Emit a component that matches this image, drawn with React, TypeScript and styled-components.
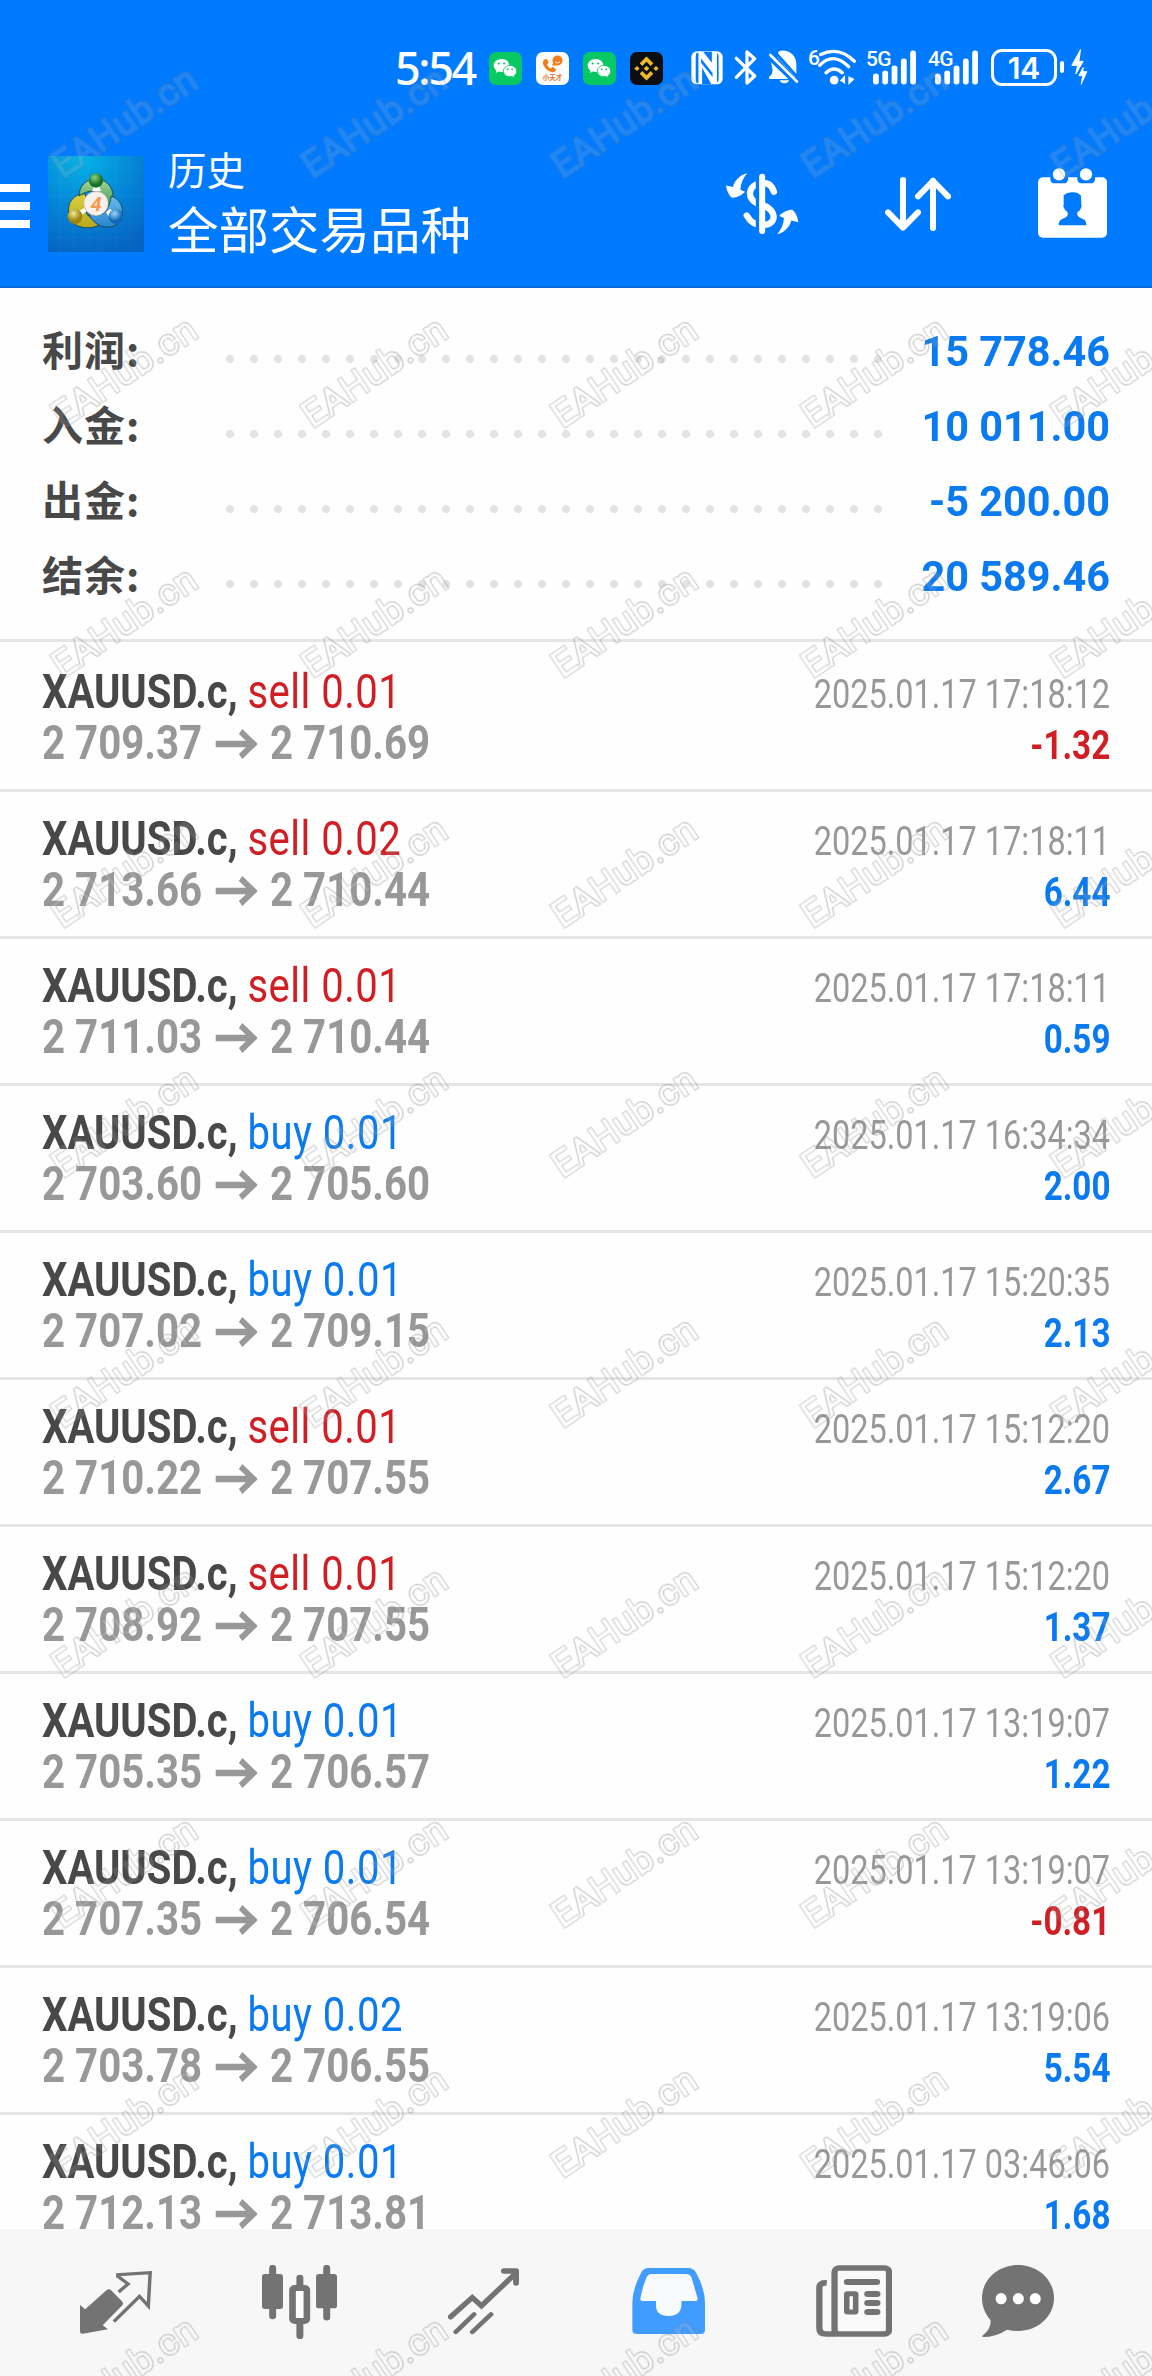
import React from "react";
import styled, { createGlobalStyle } from "styled-components";

const blue = "#007aff";

const Global = createGlobalStyle`
  body { margin: 0; background: #fff; }
  svg { display: block; flex: none; }
`;

const Screen = styled.main`
  position: relative;
  width: 1152px;
  height: 2376px;
  overflow: hidden;
  display: flex;
  flex-direction: column;
  background: #fefefe;
  font-family: Roboto, "Noto Sans CJK SC", sans-serif;
`;

const Header = styled.header`
  height: 288px;
  flex: none;
  box-sizing: border-box;
  background: ${blue};
  border-bottom: 2px solid #0b6bdc;
  color: #fff;
`;

const StatusBar = styled.div`
  height: 136px;
  box-sizing: border-box;
  padding: 49px 64px 0 395px;
  display: flex;
  align-items: flex-start;
`;

const Clock = styled.span`
  width: 93px;
  font: 500 45px/38px "Noto Sans", sans-serif;
  letter-spacing: -2.4px;
  white-space: nowrap;
`;

const Slot = styled.div<{ $gap: number; $top?: number }>`
  margin-left: ${(p) => p.$gap}px;
  margin-top: ${(p) => p.$top ?? 0}px;
  display: flex;
`;

const NetLabel = styled.span<{ $w: number }>`
  width: ${(p) => p.$w}px;
  font: 500 21px/18px Roboto, sans-serif;
  letter-spacing: -0.8px;
  white-space: nowrap;
`;

const Battery = styled.div`
  width: 66px;
  height: 37px;
  box-sizing: border-box;
  border: 3px solid #fff;
  border-radius: 11px;
  margin-left: 12px;
  text-align: center;
  font: 600 30px/32px Inter, sans-serif;
`;

const BatteryNub = styled.i`
  width: 4px;
  height: 12px;
  border-radius: 2px;
  background: #fff;
  margin: 12px 0 0 3px;
`;

const AppBar = styled.div`
  height: 150px;
  display: flex;
  align-items: flex-start;
`;

const Menu = styled.div`
  width: 30px;
  margin: 48px 18px 0 0;
  display: flex;
  flex-direction: column;
  gap: 10px;
`;

const MenuLine = styled.i`
  height: 8px;
  background: #fff;
`;

const LogoBox = styled.div`
  margin-top: 20px;
`;

const Titles = styled.div`
  flex: 1;
  padding: 9px 0 0 24px;
`;

const Section = styled.div`
  font-size: 38.5px;
  line-height: 54px;
`;

const Subject = styled.div`
  font-size: 50.5px;
  line-height: 66px;
`;

const Action = styled.div<{ $top: number; $right: number }>`
  margin: ${(p) => p.$top}px ${(p) => p.$right}px 0 0;
`;

const Summary = styled.section`
  height: 351px;
  flex: none;
  border-bottom: 3px solid #e5e5e5;
`;

const SummaryRows = styled.div`
  padding: 26px 42px 0 42px;
`;

const SummaryRow = styled.div`
  height: 75px;
  display: flex;
  align-items: center;
`;

const Label = styled.span`
  width: 176px;
  height: 75px;
  margin-top: -7px;
  color: #484848;
  font: 700 41px/75px "Noto Sans CJK SC", sans-serif;
  letter-spacing: 1px;
`;

const Leader = styled.span`
  width: 672px;
  height: 24px;
  margin-top: 18px;
  background: radial-gradient(circle at 12px 10px, #e3e3e3 3.6px, transparent 4.4px) 0 0 / 24px 24px repeat-x;
`;

const Amount = styled.span`
  flex: 1;
  text-align: right;
  color: #0a7af0;
  font-weight: 700;
  font-size: 42px;
  line-height: 74px;
  white-space: nowrap;
  transform: scaleX(0.985);
  transform-origin: right;
`;

const Deals = styled.section`
  flex: 1;
  min-height: 0;
  overflow: hidden;
  padding-top: 3px;
`;

const Deal = styled.article`
  height: 144px;
  border-bottom: 3px solid #e5e5e5;
  display: flex;
  justify-content: space-between;
  padding: 0 42px;
`;

const Column = styled.div<{ $end?: boolean }>`
  padding-top: ${(p) => (p.$end ? 24 : 21)}px;
  display: flex;
  flex-direction: column;
  align-items: ${(p) => (p.$end ? "flex-end" : "flex-start")};
`;

const Line = styled.div<{ $scale: number; $size: number; $end?: boolean }>`
  height: 51px;
  display: flex;
  align-items: baseline;
  white-space: pre;
  font-size: ${(p) => p.$size}px;
  line-height: 51px;
  transform: scaleX(${(p) => p.$scale});
  transform-origin: ${(p) => (p.$end ? "right" : "left")};
`;

const Symbol = styled.span`
  color: #484848;
  font-weight: 700;
`;

const Side = styled.span<{ $sell: boolean }>`
  color: ${(p) => (p.$sell ? "#d01f24" : "#0a7af0")};
  letter-spacing: 0.6px;
`;

const Price = styled.span`
  color: #989898;
  font-weight: 700;
`;

const Stamp = styled.span`
  color: #989898;
`;

const Profit = styled.span<{ $loss: boolean }>`
  color: ${(p) => (p.$loss ? "#d01f24" : "#0a7af0")};
  font-weight: 700;
`;

const ArrowIcon = styled.svg`
  margin: 0 15px 2px 16px;
`;

const Nav = styled.nav`
  height: 147px;
  flex: none;
  box-sizing: border-box;
  background: #f7f7f7;
  padding: 36px 0 0 80px;
  display: flex;
  gap: 110px;
  align-items: flex-start;
  color: #737373;
`;

const Tab = styled.div<{ $top?: number; $shift?: number; $active?: boolean }>`
  margin-top: ${(p) => p.$top ?? 0}px;
  margin-left: ${(p) => p.$shift ?? 0}px;
  color: ${(p) => (p.$active ? "#419cff" : "inherit")};
`;

const MarkLayer = styled.div`
  position: absolute;
  left: 63px;
  top: -71px;
  display: grid;
  grid-template-columns: repeat(5, 250px);
  grid-auto-rows: 250px;
  pointer-events: none;
`;

const MarkCell = styled.div`
  display: flex;
  align-items: flex-end;
`;

const Mark = styled.span`
  font: 300 35.5px/26px Roboto, sans-serif;
  letter-spacing: 1.7px;
  color: #000;
  -webkit-text-stroke: 3.4px #000;
  stroke-linejoin: round;
  padding-top: 10px;
  filter: url(#hollow);
  transform: rotate(-34deg);
  transform-origin: left bottom;
`;

const WeChat = () => (
  <svg width="33" height="33" viewBox="0 0 33 33">
    <rect width="33" height="33" rx="7" fill="#07c862" />
    <path d="M12.500 7c-4.500 0-7.800 3-7.800 6.500 0 2 1 3.700 2.800 5l-.8 2.600 3-1.500c.9.3 1.900.4 2.800.4 4.500 0 7.800-2.800 7.800-6.500S17 7 12.500 7z" fill="#fff" />
    <path d="M21 13.500c-4 0-6.700 2.600-6.700 5.600 0 3.100 2.800 5.600 6.700 5.600.8 0 1.600-.1 2.300-.3l2.600 1.300-.7-2.200c1.600-1.100 2.500-2.700 2.500-4.400 0-3-2.800-5.600-6.700-5.600z" fill="#fff" stroke="#07c862" strokeWidth=".8" />
    <g fill="#07c862">
      <circle cx="9.800" cy="11.500" r="1.100" /><circle cx="15.200" cy="11.500" r="1.100" />
      <circle cx="18.800" cy="17.300" r=".9" /><circle cx="23.200" cy="17.300" r=".9" />
    </g>
  </svg>
);

const KidPhone = () => (
  <svg width="33" height="33" viewBox="0 0 33 33">
    <rect width="33" height="33" rx="7" fill="#fbfbfb" />
    <path d="M8.500 7.500c-2.500 1.500-1.800 5 .4 8 2.300 3 5.600 5 8.400 4.600 1.600-.3 2.600-1.600 3-2.700l-3.600-2.600-2 1.600c-1.800-.8-3-2.200-3.700-4l1.700-1.600-1.800-3.800z" fill="#f07c1c" />
    <circle cx="21.500" cy="8.500" r="5" fill="#f07c1c" />
    <path d="M16 13.500l2-4 3 4z" fill="#f07c1c" />
    <path d="M19 10q2.500 2 5 0" stroke="#fff" strokeWidth=".9" fill="none" />
    <text x="16.500" y="28" fontSize="6.500" fontWeight="700" textAnchor="middle" fill="#e0742c" fontFamily="Noto Sans CJK SC, sans-serif">小天才</text>
  </svg>
);

const Binance = () => (
  <svg width="33" height="33" viewBox="0 0 33 33">
    <rect width="33" height="33" rx="7" fill="#0c0e12" />
    <g fill="#efb92d">
      <path d="M16.500 4.500l6.800 6.800-2.600 2.600-4.200-4.200-4.200 4.200-2.600-2.600z" />
      <path d="M16.500 28.500l6.800-6.800-2.600-2.600-4.200 4.200-4.200-4.200-2.600 2.600z" />
      <path d="M16.500 13.700l2.800 2.800-2.800 2.800-2.800-2.800z" />
      <path d="M7 13.900l2.600 2.600L7 19.100l-2.600-2.600zM26 13.900l2.600 2.600-2.600 2.600-2.600-2.600z" />
    </g>
  </svg>
);

const Nfc = () => (
  <svg width="32" height="34" viewBox="63 62 95 101">
    <rect x="64" y="63" width="93" height="98" rx="17" fill="#fff" />
    <path d="M80 67l5 0v90h-5q-3-4-3-12V79q0-8 3-12zM140 67v90q5-4 5-12V79q0-8-5-12z" fill={blue} />
    <path d="M99 64l26 33V64zM96 160h27L96 112z" fill={blue} />
    <path d="M93 84l34 43v12L93 97z" fill={blue} />
  </svg>
);

const Bluetooth = () => (
  <svg width="24" height="35" viewBox="192 60 68 105" fill="none" stroke="#fff" strokeWidth="10" strokeLinecap="round" strokeLinejoin="round">
    <path d="M197 85l55 53-23 21V66l23 20-55 56" />
  </svg>
);

const BellOff = () => (
  <svg width="31" height="34" viewBox="294 61 91 102">
    <path d="M324 66q16-8 34 2 18 10 20 34v38l-4 2-54-60z" fill="#fff" />
    <path d="M302 98l52 50h-55q-7-4 0-9 8-6 8-18z" fill="#fff" />
    <path d="M328 152h28q-3 9-14 9t-14-9z" fill="#fff" />
    <path d="M314 68l70 78" stroke={blue} strokeWidth="9" />
    <path d="M300 76l80 80" stroke="#fff" strokeWidth="8" strokeLinecap="round" />
  </svg>
);

const Wifi = () => (
  <svg width="39" height="36" viewBox="444 58 116 106" fill="none" stroke="#fff" strokeWidth="10" strokeLinecap="round">
    <path d="M452 74q54-26 100 20M449 106q40-42 86 4M468 128q24-22 48 0" />
    <circle cx="492" cy="150" r="13" fill="#fff" stroke="none" />
    <path d="M511 152l12-13v21M536 141v20l14-14z" strokeWidth="3" fill="#fff" />
  </svg>
);

const Signal = () => (
  <svg width="44" height="35" viewBox="0 0 44 35" fill="#fff">
    {[11, 14, 19, 26, 34].map((h, i) => (
      <rect key={i} x={i * 9.3} y={34.5 - h} width="5.800" height={h} rx="2.700" />
    ))}
  </svg>
);

const Bolt = () => (
  <svg width="17" height="36" viewBox="1202 58 50 108" fill="#fff" stroke="#fff" strokeWidth="3" strokeLinejoin="round">
    <path d="M1230 60l-26 47h17l-5 26 22-38h-13z" />
    <path d="M1238 114l-13 24h12l-5 26 17-38h-12z" />
  </svg>
);

const Logo = () => (
  <svg width="96" height="96" viewBox="0 0 96 96">
    <defs>
      <radialGradient id="sky" cx=".35" cy="0" r="1.050">
        <stop offset="0" stopColor="#04b4e8" /><stop offset=".55" stopColor="#0484d6" /><stop offset="1" stopColor="#0563c3" />
      </radialGradient>
      <linearGradient id="green" x1="0" y1="0" x2="0" y2="1"><stop stopColor="#a6d89a" /><stop offset="1" stopColor="#2f9045" /></linearGradient>
      <linearGradient id="gold" x1="0" y1="0" x2="0" y2="1"><stop stopColor="#d8d040" /><stop offset="1" stopColor="#b8a81c" /></linearGradient>
      <linearGradient id="azure" x1="0" y1="0" x2="0" y2="1"><stop stopColor="#6cbcec" /><stop offset="1" stopColor="#2585cf" /></linearGradient>
      <radialGradient id="ballG" cx=".4" cy=".3"><stop stopColor="#8cd47c" /><stop offset="1" stopColor="#17702a" /></radialGradient>
      <radialGradient id="ballY" cx=".4" cy=".3"><stop stopColor="#f2e88c" /><stop offset="1" stopColor="#9a8412" /></radialGradient>
      <radialGradient id="ballB" cx=".4" cy=".3"><stop stopColor="#9cd6fa" /><stop offset="1" stopColor="#1268b8" /></radialGradient>
    </defs>
    <rect width="96" height="96" fill="url(#sky)" />
    <path d="M0 12h96M0 26h96M0 40h96M0 54h96M0 68h96M0 82h96M12 0v96M26 0v96M40 0v96M54 0v96M68 0v96M82 0v96" stroke="#fff" strokeOpacity=".04" />
    <g stroke="#1d4b58" strokeWidth="1">
      <path d="M21 60C18 46 27 37 37 38l4 10c-5 4-4 10 2 14 3 3 6 6 8 7-8 5-27 4-30-9z" fill="url(#gold)" />
      <path d="M31 40c0-10 7-17 17-17s17 8 17 17c0 7-3 12-6 15l-8-17c-5-5-12-3-20 2z" fill="url(#green)" />
      <path d="M63 40c10 3 13 13 11 21-2 10-17 13-25 7-4-3-7-6-8-10 8 2 15 2 18-5 2-4 4-8 4-13z" fill="url(#azure)" />
    </g>
    <path d="M44 35l2-5h5l2 5zM31 55l5-3 3 3-5 4zM58 56l4-3 4 3-5 5z" fill="#fff" />
    <circle cx="48" cy="24.500" r="7.200" fill="url(#ballG)" />
    <circle cx="27" cy="60.500" r="7.500" fill="url(#ballY)" />
    <circle cx="68" cy="60.500" r="7.500" fill="url(#ballB)" />
    <circle cx="48" cy="47.500" r="12" fill="#f7f1ee" stroke="#d9c8bd" strokeWidth=".7" />
    <text x="48" y="54.500" fontSize="20" fontWeight="700" fontStyle="italic" fontFamily="Roboto, sans-serif" textAnchor="middle" fill="#f49a4e">4</text>
  </svg>
);

const Exchange = () => (
  <svg width="73" height="62" viewBox="78 100 218 185">
    <path d="M221 156C212 128 196 130 186 130c-46 4-48 50-8 63 54 12 54 62 12 62-28 0-40-10-50-28" fill="none" stroke="#fff" strokeWidth="19" strokeLinecap="round" />
    <path d="M172 118v150" stroke={blue} strokeWidth="10" />
    <path d="M186 111v162" stroke="#fff" strokeWidth="18" strokeLinecap="round" />
    <g fill="#fff">
      <path d="M141 101c-20 4-38 22-42 41l-21-5c2 17 10 31 18 37 14 0 30-8 39-18l-14-6c1-19 8-34 20-49z" />
      <path transform="rotate(180 186 192)" d="M141 101c-20 4-38 22-42 41l-21-5c2 17 10 31 18 37 14 0 30-8 39-18l-14-6c1-19 8-34 20-49z" />
    </g>
  </svg>
);

const Sort = () => (
  <svg width="66" height="54" viewBox="555 110 198 162" fill="none" stroke="#fff" strokeWidth="18" strokeLinecap="round" strokeLinejoin="round">
    <path d="M609 119v142M564 216l45 46 45-46M699 263V121M654 168l45-46 45 46" />
  </svg>
);

const CalendarUser = () => (
  <svg width="69" height="70" viewBox="1014 83 207 210">
    <rect x="1014" y="111" width="207" height="181" rx="15" fill="#fff" />
    <path d="M1051 108h53v7q0 14-14 14h-25q-14 0-14-14zM1132 108h53v7q0 14-14 14h-25q-14 0-14-14z" fill={blue} />
    <circle cx="1077" cy="102" r="18.500" fill="#fff" />
    <circle cx="1158" cy="102" r="18.500" fill="#fff" />
    <path d="M1091 165q12-10 26-9 16-1 26 10l1 27q3 3-1 10-3 9-11 13c-2 9 3 14 12 18 11 4 15 10 15 21h-83c0-12 5-17 16-21 9-4 13-9 11-18q-8-5-11-13-4-6-1-10z" fill={blue} />
  </svg>
);

const QuotesIcon = () => (
  <svg width="72" height="63" viewBox="218 483 196 189" preserveAspectRatio="none">
    <path d="M218 585l14 13 58-57q7-7 14 1l27 30q8 7 1 15l-52 59 14 12-68 13q-8 1-8-8z" fill="currentColor" />
    <path d="M323 546l26-24-28-23v-5l88-6-5 100-24-29-70 76" fill="none" stroke="currentColor" strokeWidth="9.500" />
  </svg>
);

const CandlesIcon = () => (
  <svg width="75" height="74" viewBox="713 465 204 222" preserveAspectRatio="none">
    <path d="M742 474v144M889 474v148M816 504v30M816 640v38" stroke="currentColor" strokeWidth="19" strokeLinecap="round" />
    <rect x="713" y="492" width="57" height="105" rx="8" fill="currentColor" />
    <rect x="860" y="492" width="57" height="103" rx="8" fill="currentColor" />
    <rect x="796" y="534" width="39" height="99" rx="6" fill="#fff" stroke="currentColor" strokeWidth="18" />
  </svg>
);

const TrendIcon = () => (
  <svg width="71" height="67" viewBox="1220 473 193 200" preserveAspectRatio="none" fill="none" stroke="currentColor" strokeWidth="15" strokeLinecap="round">
    <path d="M1227 619l59-58 25 25 92-96" />
    <path d="M1372 482h33v36" strokeWidth="16" strokeLinejoin="round" />
    <path d="M1241 664l50-53M1286 664l51-53" strokeWidth="13" />
  </svg>
);

const TrayIcon = () => (
  <svg width="73" height="66" viewBox="152 474 198 198" preserveAspectRatio="none">
    <path d="M197 474h107q15 0 22 14 24 50 24 90v82q0 12-12 12H165q-12 0-12-12v-82q0-40 24-90 6-14 20-14z" fill="currentColor" />
    <path d="M204 492h93q12 0 16 9l17 64q1 8-6 8h-38v10q0 35-35 35t-34-35v-10h-36q-8 0-6-8 4-30 17-64 4-9 12-9z" fill="#f9fafc" />
  </svg>
);

const NewsIcon = () => (
  <svg width="76" height="72" viewBox="654 465 205 216" preserveAspectRatio="none">
    <path d="M682 519q-11 0-11 15v120q0 8 10 9h15V519z" fill="#fafafa" />
    <path d="M683 519q-20-2-20 14v122q0 17 18 17h30" fill="none" stroke="currentColor" strokeWidth="17" />
    <rect x="704" y="474" width="147" height="198" rx="12" fill="#f9f9f9" stroke="currentColor" strokeWidth="17" />
    <path d="M738 516h80M793 552h26M793 579h26M793 606h26" stroke="currentColor" strokeWidth="18" strokeLinecap="round" />
    <rect x="737" y="551" width="24" height="55" rx="2" fill="#fff" stroke="currentColor" strokeWidth="15" strokeLinejoin="round" />
  </svg>
);

const ChatIcon = () => (
  <svg width="72" height="72" viewBox="1105 465 196 216" preserveAspectRatio="none">
    <path d="M1203 465c54 0 98 44 98 99s-44 99-98 99q-16 0-30-4-30 22-66 22-3-3 2-7 22-20 19-44c-14-18-23-40-23-66 0-55 44-99 98-99z" fill="currentColor" />
    <g fill="#fff"><ellipse cx="1157" cy="566" rx="15" ry="17" /><ellipse cx="1204" cy="566" rx="15" ry="17" /><ellipse cx="1250" cy="566" rx="15" ry="17" /></g>
  </svg>
);

const totals = [
  ["利润:", "15 778.46"],
  ["入金:", "10 011.00"],
  ["出金:", "-5 200.00"],
  ["结余:", "20 589.46"],
];

const deals = [
  ["sell 0.01", "2 709.37", "2 710.69", "17:18:12", "-1.32"],
  ["sell 0.02", "2 713.66", "2 710.44", "17:18:11", "6.44"],
  ["sell 0.01", "2 711.03", "2 710.44", "17:18:11", "0.59"],
  ["buy 0.01", "2 703.60", "2 705.60", "16:34:34", "2.00"],
  ["buy 0.01", "2 707.02", "2 709.15", "15:20:35", "2.13"],
  ["sell 0.01", "2 710.22", "2 707.55", "15:12:20", "2.67"],
  ["sell 0.01", "2 708.92", "2 707.55", "15:12:20", "1.37"],
  ["buy 0.01", "2 705.35", "2 706.57", "13:19:07", "1.22"],
  ["buy 0.01", "2 707.35", "2 706.54", "13:19:07", "-0.81"],
  ["buy 0.02", "2 703.78", "2 706.55", "13:19:06", "5.54"],
  ["buy 0.01", "2 712.13", "2 713.81", "03:46:06", "1.68"],
];

export default function App() {
  return (
    <Screen>
      <Global />
      <Header>
        <StatusBar>
          <Clock>5:54</Clock>
          <Slot $gap={1} $top={3}><WeChat /></Slot>
          <Slot $gap={14} $top={3}><KidPhone /></Slot>
          <Slot $gap={14} $top={3}><WeChat /></Slot>
          <Slot $gap={14} $top={3}><Binance /></Slot>
          <Slot $gap={28} $top={2}><Nfc /></Slot>
          <Slot $gap={11} $top={1}><Bluetooth /></Slot>
          <Slot $gap={10} $top={1}><BellOff /></Slot>
          <Slot $gap={9}><NetLabel $w={10}>6</NetLabel><Wifi /></Slot>
          <Slot $gap={9} $top={1}><NetLabel $w={7}>5G</NetLabel><Signal /></Slot>
          <Slot $gap={11} $top={1}><NetLabel $w={7}>4G</NetLabel><Signal /></Slot>
          <Battery>14</Battery>
          <BatteryNub />
          <Slot $gap={7}><Bolt /></Slot>
        </StatusBar>
        <AppBar>
          <Menu><MenuLine /><MenuLine /><MenuLine /></Menu>
          <LogoBox><Logo /></LogoBox>
          <Titles>
            <Section>历史</Section>
            <Subject>全部交易品种</Subject>
          </Titles>
          <Action $top={37} $right={86}><Exchange /></Action>
          <Action $top={41} $right={87}><Sort /></Action>
          <Action $top={32} $right={45}><CalendarUser /></Action>
        </AppBar>
      </Header>
      <Summary>
        <SummaryRows>
          {totals.map(([label, amount]) => (
            <SummaryRow key={label}>
              <Label>{label}</Label>
              <Leader />
              <Amount>{amount}</Amount>
            </SummaryRow>
          ))}
        </SummaryRows>
      </Summary>
      <Deals>
        {deals.map(([side, from, to, time, profit], i) => (
          <Deal key={i}>
            <Column>
              <Line $scale={0.834} $size={48}>
                <Symbol>XAUUSD.c, </Symbol>
                <Side $sell={side.startsWith("sell")}>{side}</Side>
              </Line>
              <Line $scale={0.838} $size={48}>
                <Price>{from}</Price>
                <ArrowIcon width="50" height="30" viewBox="0 0 50 30" fill="none" stroke="#989898" strokeWidth="6.500">
                  <path d="M0 15h45M30 2.500l15.500 12.500-15.500 12.500" />
                </ArrowIcon>
                <Price>{to}</Price>
              </Line>
            </Column>
            <Column $end>
              <Line $scale={0.812} $size={40} $end><Stamp>2025.01.17 {time}</Stamp></Line>
              <Line $scale={0.83} $size={40} $end><Profit $loss={profit.startsWith("-")}>{profit}</Profit></Line>
            </Column>
          </Deal>
        ))}
      </Deals>
      <Nav>
        <Tab $top={6}><QuotesIcon /></Tab>
        <Tab><CandlesIcon /></Tab>
        <Tab $top={3} $shift={1}><TrendIcon /></Tab>
        <Tab $top={3} $shift={3} $active><TrayIcon /></Tab>
        <Tab $shift={1}><NewsIcon /></Tab>
        <Tab $shift={-20}><ChatIcon /></Tab>
      </Nav>
      <svg width="0" height="0">
        <filter id="hollow" x="-5%" y="-20%" width="110%" height="140%">
          <feMorphology in="SourceAlpha" operator="erode" radius="0.8" result="core" />
          <feComposite in="SourceAlpha" in2="core" operator="out" result="ring" />
          <feFlood floodColor="#808080" floodOpacity=".42" />
          <feComposite in2="ring" operator="in" result="edge" />
          <feFlood floodColor="#ffffff" floodOpacity=".1" />
          <feComposite in2="core" operator="in" result="fill" />
          <feMerge><feMergeNode in="fill" /><feMergeNode in="edge" /></feMerge>
        </filter>
      </svg>
      <MarkLayer>
        {Array.from({ length: 50 }, (_, i) => (
          <MarkCell key={i}><Mark>EAHub.cn</Mark></MarkCell>
        ))}
      </MarkLayer>
    </Screen>
  );
}
